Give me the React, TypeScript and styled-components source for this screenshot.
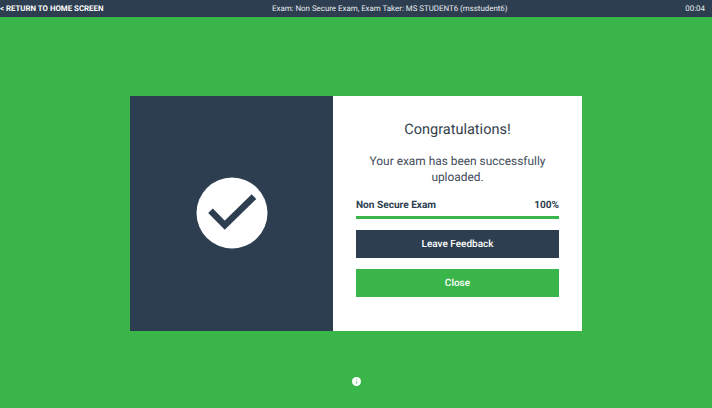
import styled, { createGlobalStyle } from "styled-components"

const GlobalStyle = createGlobalStyle`
  html, body {
    margin: 0;
    padding: 0;
    height: 100%;
    overflow: hidden;
    background: #39b54a;
    font-family: Roboto, "Liberation Sans", sans-serif;
    text-rendering: geometricPrecision;
  }
`

const App = () => {
  return (
    <Page>
      <GlobalStyle />
      <TopBar>
        <BackLink>&lt; RETURN TO HOME SCREEN</BackLink>
        <ExamInfo>Exam: Non Secure Exam, Exam Taker: MS STUDENT6 (msstudent6)</ExamInfo>
        <Timer>00:04</Timer>
      </TopBar>
      <Main>
        <Card>
          <IconPanel>
            <CheckCircle>
              <svg width="72" height="72" viewBox="0 0 72 72">
                <circle cx="36" cy="36" r="35.5" fill="#fff" />
                <path d="M14.5 33.8 L28.8 48.2 L58 19.7" fill="none" stroke="#2d3e50" strokeWidth="6.5" />
              </svg>
            </CheckCircle>
          </IconPanel>
          <Content>
            <Title>Congratulations!</Title>
            <Message>Your exam has been successfully uploaded.</Message>
            <ProgressLabels>
              <span>Non Secure Exam</span>
              <span>100%</span>
            </ProgressLabels>
            <ProgressBar />
            <ActionButton $variant="dark">Leave Feedback</ActionButton>
            <ActionButton $variant="green">Close</ActionButton>
          </Content>
        </Card>
        <InfoButton>
          <svg width="9" height="9" viewBox="0 0 9 9">
            <circle cx="4.5" cy="4.5" r="4.5" fill="#fff" />
            <rect x="3.9" y="3.9" width="1.2" height="3" fill="#8fd49a" />
            <rect x="3.9" y="2" width="1.2" height="1.1" fill="#8fd49a" />
          </svg>
        </InfoButton>
      </Main>
    </Page>
  )
}

const Page = styled.div`
  width: 712px;
  height: 408px;
  display: flex;
  flex-direction: column;
  background: #39b54a;
`

const TopBar = styled.header`
  height: 17px;
  flex: none;
  display: grid;
  grid-template-columns: 272px auto 1fr;
  align-items: center;
  background: #2d3e50;
  color: #fff;
  font-size: 7.9px;
  line-height: 14px;
`

const BackLink = styled.a`
  font-weight: 700;
  font-size: 7.85px;
  white-space: nowrap;
`

const ExamInfo = styled.div`
  white-space: nowrap;
  color: #e8ebee;
`

const Timer = styled.div`
  justify-self: end;
  padding-right: 7px;
  color: #e8ebee;
`

const Main = styled.main`
  flex: 1;
  display: flex;
  flex-direction: column;
  align-items: center;
  padding-top: 79px;
`

const Card = styled.section`
  width: 452px;
  height: 235px;
  display: flex;
  background: #fff;
`

const IconPanel = styled.div`
  width: 203px;
  flex: none;
  display: flex;
  align-items: center;
  justify-content: center;
  background: #2d3e50;
`

const CheckCircle = styled.div`
  width: 72px;
  height: 72px;
  margin-top: -1px;
`

const Content = styled.div`
  flex: 1;
  padding: 25px 23px 0;
  display: flex;
  flex-direction: column;
  color: #2d3e50;
`

const Title = styled.h1`
  margin: 0;
  font-size: 14.5px;
  font-weight: 400;
  line-height: 18px;
  text-align: center;
  color: #333f4d;
`

const Message = styled.p`
  margin: 14px 0 0;
  font-size: 11.9px;
  line-height: 16px;
  text-align: center;
  color: #3f4c5a;
`

const ProgressLabels = styled.div`
  margin-top: 14px;
  display: flex;
  justify-content: space-between;
  font-size: 10.1px;
  line-height: 13px;
  font-weight: 700;
  color: #2d3e50;
`

const ProgressBar = styled.div`
  margin-top: 4px;
  height: 3px;
  background: #39b54a;
`

const ActionButton = styled.div<{ $variant: "dark" | "green" }>`
  height: 28px;
  margin-top: 11px;
  display: flex;
  align-items: center;
  justify-content: center;
  font-size: 10px;
  font-weight: 500;
  color: #fff;
  background: ${(p) => (p.$variant === "dark" ? "#2d3e50" : "#39b54a")};
`

const InfoButton = styled.div`
  margin: 46px 0 0;
  width: 9px;
  height: 9px;
  display: flex;
`

export default App
